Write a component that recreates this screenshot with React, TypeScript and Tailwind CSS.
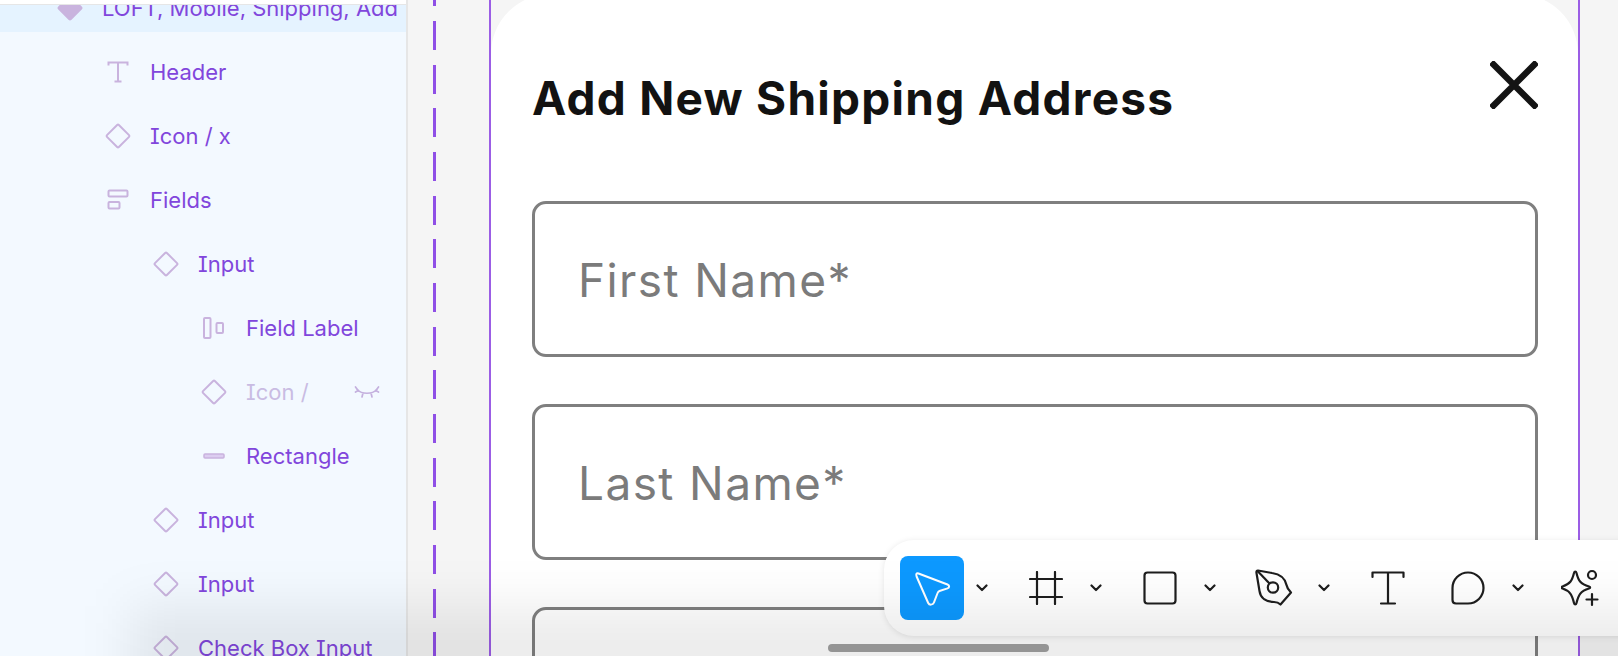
import React from "react";

const Diamond = ({ filled = false }: { filled?: boolean }) => (
  <svg width="28" height="28" viewBox="0 0 28 28" fill={filled ? "#c9b3de" : "none"} stroke="#c9b3de" strokeWidth="2">
    <rect x="5.6" y="5.6" width="16.8" height="16.8" rx="1.2" transform="rotate(45 14 14)" />
  </svg>
);
const TextIcon = () => (
  <svg width="22" height="22" viewBox="0 0 22 22" fill="none" stroke="#c9b3de" strokeWidth="2">
    <path d="M1.5 4.5V1.5H20.5V4.5M11 1.5V20.5M7.5 20.5H14.5" />
  </svg>
);
const StackIcon = () => (
  <svg width="22" height="22" viewBox="0 0 22 22" fill="none" stroke="#c9b3de" strokeWidth="2">
    <rect x="1.5" y="1.5" width="19" height="6" rx="1" />
    <rect x="1.5" y="13" width="11" height="6.5" rx="1" />
  </svg>
);
const ColsIcon = () => (
  <svg width="22" height="22" viewBox="0 0 22 22" fill="none" stroke="#c9b3de" strokeWidth="2">
    <rect x="1" y="1" width="6.5" height="20" rx="1" />
    <rect x="13.5" y="6" width="6.5" height="10" rx="1" />
  </svg>
);
const RectIcon = () => (
  <svg width="22" height="6" viewBox="0 0 22 6" fill="#dccdf0" stroke="#c9b3de" strokeWidth="1.5">
    <rect x="1" y="1" width="20" height="4" rx="1" />
  </svg>
);
const EyeClosed = () => (
  <svg width="26" height="14" viewBox="0 0 26 14" fill="none" stroke="#c4b0de" strokeWidth="1.7" strokeLinecap="round">
    <path d="M3 4.5C8 9.5 18 9.5 23 4.5M1.5 2L4.5 6M24.5 2L21.5 6M1.5 7L4.5 5.5M24.5 7L21.5 5.5M9 8L8 12M17 8L18 12" />
  </svg>
);

type Row = { level: number; label: string; icon: React.ReactNode; dim?: boolean; eye?: boolean; selected?: boolean };
const rows: Row[] = [
  { level: 0, label: "LOFT, Mobile, Shipping, Add", icon: <Diamond filled />, selected: true },
  { level: 1, label: "Header", icon: <TextIcon /> },
  { level: 1, label: "Icon / x", icon: <Diamond /> },
  { level: 1, label: "Fields", icon: <StackIcon /> },
  { level: 2, label: "Input", icon: <Diamond /> },
  { level: 3, label: "Field Label", icon: <ColsIcon /> },
  { level: 3, label: "Icon /", icon: <Diamond />, dim: true, eye: true },
  { level: 3, label: "Rectangle", icon: <RectIcon /> },
  { level: 2, label: "Input", icon: <Diamond /> },
  { level: 2, label: "Input", icon: <Diamond /> },
  { level: 2, label: "Check Box Input", icon: <Diamond /> },
];
const indent = ["pl-[54px]", "pl-[102px]", "pl-[150px]", "pl-[198px]"];

const Chevron = () => (
  <div className="w-9 h-16 flex items-center justify-center">
    <svg width="12" height="8" viewBox="0 0 12 8" fill="none" stroke="#1e1e1e" strokeWidth="2.2" strokeLinecap="round" strokeLinejoin="round">
      <path d="M1.5 1.5L6 6L10.5 1.5" />
    </svg>
  </div>
);

const Tool = ({ children, active = false }: { children: React.ReactNode; active?: boolean }) => (
  <div className={`w-16 h-16 rounded-lg flex items-center justify-center ${active ? "bg-[#0d99ff]" : ""}`}>{children}</div>
);

const ic = { fill: "none", stroke: "#1e1e1e", strokeWidth: 2.2, strokeLinecap: "round", strokeLinejoin: "round" } as const;

const InputBox = ({ label }: { label: string }) => (
  <div className="h-[156px] shrink-0 rounded-[14px] border-[3px] border-[#7f7f7f] flex items-center pl-[43px] pt-[2px] text-[46px] text-[#7b7b7b] tracking-[1.4px]">
    {label}
  </div>
);

export default function App() {
  return (
    <div className="relative w-[1618px] h-[656px] overflow-hidden flex bg-[#f5f5f5] font-['Inter',sans-serif]">
      <aside className="w-[408px] shrink-0 h-full overflow-hidden bg-[#f3f9ff] border-r-2 border-[#e6e6e6] text-[22px] text-[#8146dc] [font-feature-settings:'cv08']">
        <div className="relative z-10 h-[5px] bg-white border-b border-[#e6e6e6]" />
        <div className="-mt-[21px] flex flex-col">
          {rows.map((r, i) => (
            <div key={i} className={`h-12 mb-4 shrink-0 flex items-center whitespace-nowrap ${indent[r.level]} ${r.selected ? "bg-[#e5f3ff]" : ""} ${r.dim ? "text-[#c9bce3]" : ""}`}>
              <div className="w-8 h-8 flex items-center justify-center shrink-0">{r.icon}</div>
              <span className="ml-4">{r.label}</span>
              {r.eye && <div className="ml-[45px] flex items-center"><EyeClosed /></div>}
            </div>
          ))}
        </div>
      </aside>

      <div className="flex-1 flex h-full">
        <div className="ml-[25px] w-[3px] h-full shrink-0 bg-[repeating-linear-gradient(to_bottom,#8f4fe6_0,#8f4fe6_6.33px,transparent_6.33px,transparent_21px,#8f4fe6_21px,#8f4fe6_43.67px)]" />
        <div className="ml-[53px] w-[1091px] h-full shrink-0 border-x-2 border-[#9b5de5] overflow-hidden">
          <div className="-mt-[6px] rounded-t-[60px] bg-white h-[680px] pl-[41px] pr-[40px] flex flex-col">
            <div className="h-[207px] shrink-0 flex items-start justify-between">
              <h1 className="mt-[74px] text-[46px] leading-[60px] font-bold text-[#121212] whitespace-nowrap tracking-[1.26px]">Add New Shipping Address</h1>
              <svg className="mt-[67px]" width="48" height="48" viewBox="0 0 48 48" fill="none" stroke="#141414" strokeWidth="6.5" strokeLinecap="square">
                <path d="M3.5 3.5L44.5 44.5M44.5 3.5L3.5 44.5" />
              </svg>
            </div>
            <div className="flex flex-col gap-[47px]">
              <InputBox label="First Name*" />
              <InputBox label="Last Name*" />
              <InputBox label="" />
            </div>
          </div>
        </div>
      </div>

      <div className="absolute left-[884px] top-[540px] w-[800px] h-[96px] bg-white rounded-[30px] shadow-[0_1px_6px_rgba(0,0,0,0.1)] flex items-center pl-4">
        <Tool active>
          <svg width="40" height="40" viewBox="0 0 40 40" fill="none" stroke="#fff" strokeWidth="2" strokeLinejoin="round">
            <path d="M6.5 5.5L35.5 16.5C37.8 17.4 37.6 19.6 35.5 20.4L27.5 23C26.5 23.4 26 24 25.6 25L21.8 34.8C21 37.2 17.2 37.2 16.2 35L4.6 8.5C3.8 6.2 4.5 4.7 6.5 5.5Z" />
          </svg>
        </Tool>
        <Chevron />
        <div className="ml-[14px]">
          <Tool>
            <svg width="34" height="34" viewBox="0 0 34 34" {...ic}>
              <path d="M1 8H33M1 26H33M8 1V33M26 1V33" />
            </svg>
          </Tool>
        </div>
        <Chevron />
        <div className="ml-[14px]">
          <Tool>
            <svg width="34" height="34" viewBox="0 0 34 34" {...ic}>
              <rect x="1.5" y="1.5" width="31" height="31" rx="3" />
            </svg>
          </Tool>
        </div>
        <Chevron />
        <div className="ml-[14px]">
          <Tool>
            <svg width="38" height="38" viewBox="0 0 38 38" {...ic}>
              <path d="M3 1.5L17 4C24 5 30 9 31.5 16C32 19 33.5 21 36 23.5L25.5 35.5C23.5 33.5 21 33 19 33C11 33 5.5 29 4.5 22L1.5 4C1.2 2.3 1.8 1.4 3 1.5Z" />
              <path d="M3 2.5L14 14" />
              <circle cx="18" cy="18.5" r="5.2" />
            </svg>
          </Tool>
        </div>
        <Chevron />
        <div className="ml-[14px]">
          <Tool>
            <svg width="34" height="34" viewBox="0 0 34 34" {...ic}>
              <path d="M1.5 6V1.5H32.5V6M17 1.5V32.5M10 32.5H24" />
            </svg>
          </Tool>
        </div>
        <div className="ml-[16px]">
          <Tool>
            <svg width="34" height="34" viewBox="0 0 34 34" {...ic}>
              <path d="M17 1.5C25.5 1.5 32.5 8.5 32.5 17C32.5 25.5 25.5 32.5 17 32.5H5C3 32.5 1.5 31 1.5 29V17C1.5 8.5 8.5 1.5 17 1.5Z" />
            </svg>
          </Tool>
        </div>
        <Chevron />
        <div className="ml-[12px]">
          <Tool>
            <svg width="38" height="38" viewBox="0 0 38 38" {...ic}>
              <path d="M15.5 4C17.5 12 19.5 15 28 17.5C29.5 18 29.5 19 28 19.5C19.5 22 17.5 26 15.5 34C15 36 13.5 36 13 34C11 26 9 22 1.5 19.5C0.5 19 0.5 18 1.5 17.5C9 15 11 12 13 4C13.5 2 15 2 15.5 4Z" />
              <circle cx="31" cy="6" r="4" />
              <path d="M31 25V36M25.5 30.5H36.5" />
            </svg>
          </Tool>
        </div>
      </div>

      <div className="absolute left-[828px] top-[644px] w-[221px] h-2 rounded-full bg-[#a0a0a0]" />
      <div className="absolute pointer-events-none left-[130px] -right-[150px] -bottom-[50px] h-[100px] bg-black/[0.075] blur-[25px]" />
    </div>
  );
}
